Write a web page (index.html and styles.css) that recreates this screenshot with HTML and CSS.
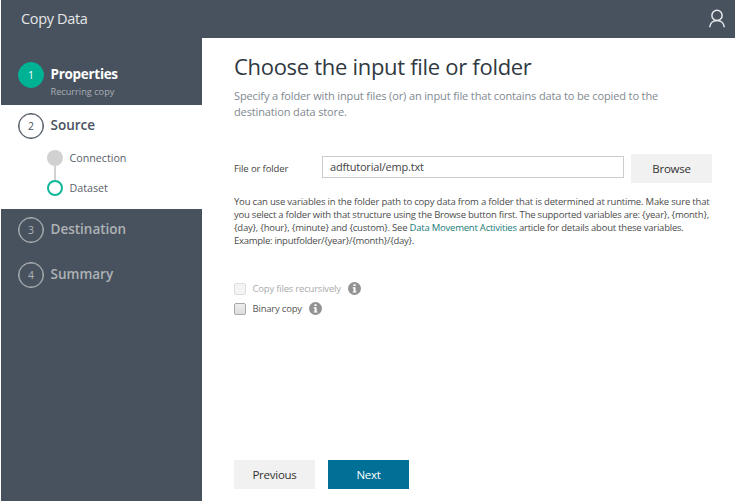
FILE: index.html
```html
<!DOCTYPE html>
<html lang="en">
<head>
<meta charset="utf-8">
<title>Copy Data</title>
<link rel="stylesheet" href="styles.css">
</head>
<body>
<div class="app">
  <header class="topbar">
    <h1 class="app-title">Copy Data</h1>
    <svg class="user" viewBox="0 0 18 20" width="18" height="20"><circle cx="9" cy="6.4" r="5.1"/><path d="M1.7 18.3c.3-3.700 3-6.700 7.300-6.700s7 3 7.300 6.700"/></svg>
  </header>
  <div class="body">
    <nav class="sidebar">
      <div class="step done"><span class="num">1</span><div class="step-text"><span class="name properties">Properties</span><span class="sub">Recurring copy</span></div></div>
      <section class="current">
        <div class="step"><span class="num">2</span><span class="name">Source</span></div>
        <ul class="substeps">
          <li class="visited"><i></i><span>Connection</span></li>
          <li class="active"><i></i><span>Dataset</span></li>
        </ul>
      </section>
      <div class="step todo first"><span class="num">3</span><span class="name">Destination</span></div>
      <div class="step todo"><span class="num">4</span><span class="name">Summary</span></div>
    </nav>
    <main class="content">
      <h2 class="heading">Choose the input file or folder</h2>
      <p class="intro">Specify a folder with input files (or) an input file that contains data to be copied to the<br>destination data store.</p>
      <div class="field">
        <label class="field-label" for="path">File or folder</label>
        <input class="path" id="path" type="text" value="adftutorial/emp.txt">
        <button class="btn browse">Browse</button>
      </div>
      <p class="help"><span>You can use variables in the folder path to copy data from a folder that is determined at runtime. Make sure that</span><br><span class="line-2">you select a folder with that structure using the Browse button first. The supported variables are: {year}, {month},</span><br><span class="line-3">{day}, {hour}, {minute} and {custom}. See <a>Data Movement Activities</a> article for details about these variables.</span><br><span class="line-4">Example: inputfolder/{year}/{month}/{day}.</span></p>
      <div class="options">
        <div class="option off"><span class="box"></span><span>Copy files recursively</span><svg class="info" viewBox="0 0 13 13" width="13" height="13"><circle cx="6.500" cy="6.500" r="6.500"/><path d="M5.400 2.200h2.200v1.900H5.400zM4.700 5.200h2.900v4.200h.9v1.200H4.700V9.400h.9v-3h-.9z"/></svg></div>
        <div class="option"><span class="box"></span><span>Binary copy</span><svg class="info" viewBox="0 0 13 13" width="13" height="13"><circle cx="6.500" cy="6.500" r="6.500"/><path d="M5.400 2.200h2.200v1.900H5.400zM4.700 5.200h2.900v4.200h.9v1.200H4.700V9.400h.9v-3h-.9z"/></svg></div>
      </div>
      <footer class="actions"><button class="btn">Previous</button><button class="btn next">Next</button></footer>
    </main>
  </div>
</div>
</body>
</html>
```
FILE: styles.css
```css
* { box-sizing: border-box; }
body { margin: 0; background: #fff; font-family: "Open Sans", "Noto Sans", sans-serif; color: #444; overflow: hidden; }
h1, h2, p, ul { margin: 0; padding: 0; font-weight: 400; }
span, h1, h2, label, p { white-space: nowrap; }
.app { width: 734px; height: 501px; margin-left: 1px; display: flex; flex-direction: column; }
.topbar { height: 38px; flex: none; background: #48525e; display: flex; justify-content: space-between; align-items: center; padding: 0 9px 0 20px; }
.app-title { font-size: 14.500px; line-height: 20px; letter-spacing: -.35px; color: #e4e6e8; }
.user { fill: none; stroke: #e8eaec; stroke-width: 1.5; }
.body { flex: 1; display: flex; min-height: 0; }
.sidebar { width: 201px; background: #48525e; color: #aeb2b6; }
.step { height: 45px; padding-left: 17px; display: flex; align-items: center; }
.num { width: 26px; height: 26px; border: 1.500px solid currentColor; box-shadow: inset 0 0 0 .5px currentColor; border-radius: 50%; font-size: 10.500px; display: flex; align-items: center; justify-content: center; margin-right: 6.500px; flex: none; }
.name { font-size: 13.500px; font-weight: 600; line-height: 20px; margin-top: -2px; }
.done { height: 67px; padding-top: 7px; color: #fff; }
.done .num { background: #00b294; border-color: #00b294; box-shadow: none; }
.step-text { display: flex; flex-direction: column; padding-top: 15px; }
.properties { font-weight: 700; letter-spacing: -.3px; }
.sub { font-size: 9.200px; line-height: 15px; color: #a9aeb4; }
.current { height: 104px; background: #fff; color: #49525e; }
.current .step { height: 41px; }
.substeps { list-style: none; padding: 4px 0 0 46px; }
.substeps li { height: 16px; display: flex; align-items: center; font-size: 10.700px; color: #59606a; }
.substeps i { width: 16px; height: 16px; border-radius: 50%; margin-right: 6.500px; }
.visited i { background: #d1d1d1; }
.substeps .active { margin-top: 14px; position: relative; }
.active i { border: 2px solid #12b79b; }
.active::before { content: ""; position: absolute; left: 7px; top: -14px; width: 2px; height: 14px; background: #d1d1d1; }
.first { height: 42px; margin-bottom: 1px; }
.content { flex: 1; padding: 14px 0 0 32px; display: flex; flex-direction: column; }
.heading { font-size: 22px; line-height: 28px; letter-spacing: -.3px; color: #303942; }
.intro { margin-top: 8px; font-size: 11px; line-height: 16px; letter-spacing: -.13px; color: #818991; }
.field { margin-top: 34px; height: 29px; width: 478px; display: flex; }
.field-label { width: 88px; font-size: 9.500px; line-height: 29px; letter-spacing: -.12px; }
.path { width: 302px; height: 22px; margin: 2px 7px 0 0; padding: 0 7px 2px; border: 1px solid #ccc; font: 11px/18px "Open Sans", sans-serif; letter-spacing: -.2px; color: #444; outline: none; }
.btn { width: 81px; height: 29px; border: 0; padding: 0; background: #f1f1f1; color: #333; font: 11.500px/29px "Open Sans", sans-serif; letter-spacing: -.25px; }
.help { margin-top: 13px; font-size: 9.500px; line-height: 12.900px; letter-spacing: -.19px; color: #4c4c4c; }
.line-2, .line-3 { letter-spacing: -.225px; }
.line-4 { letter-spacing: -.27px; }
.help a { color: #207b76; }
.options { margin-top: 31px; }
.option { height: 20px; display: flex; align-items: center; font-size: 9.500px; letter-spacing: -.2px; color: #555; }
.box { width: 12px; height: 12px; border: 1px solid #aaa; border-radius: 2px; background: linear-gradient(#eee, #ddd); margin-right: 6.500px; }
.off { color: #aaa; }
.off .box { border-color: #ddd; background: #f4f4f4; }
.info { margin-left: 7px; }
.info circle { fill: #929292; }
.info path { fill: #fff; }
.actions { display: flex; gap: 13px; margin-top: auto; padding-bottom: 12px; }
.next { background: #007096; color: #fff; }
```
